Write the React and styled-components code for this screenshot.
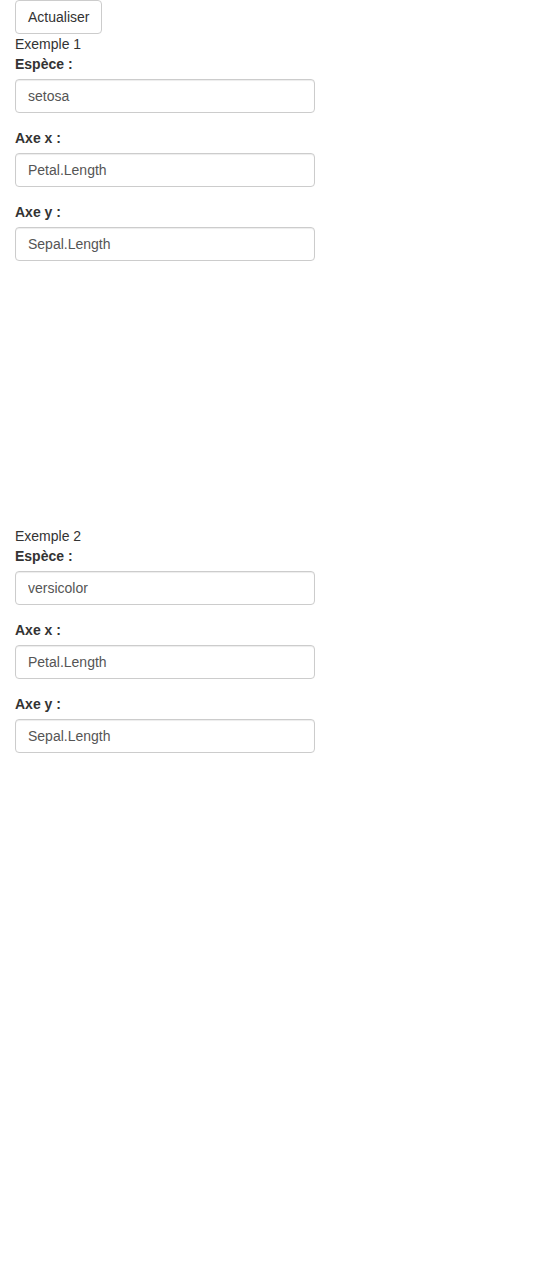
import React from "react";
import styled, { createGlobalStyle } from "styled-components";

const GlobalStyle = createGlobalStyle`
	html, body {
		margin: 0;
		padding: 0;
		background: #fff;
	}
	body {
		font-family: "Liberation Sans", Arial, Helvetica, sans-serif;
		font-size: 14px;
		line-height: 20px;
		color: #333;
	}
	* {
		box-sizing: border-box;
	}
`;

const Page = styled.div`
	padding: 0 15px;
	min-height: 1268px;
`;

const Button = styled.button`
	display: block;
	height: 34px;
	padding: 6px 12px;
	font-family: inherit;
	font-size: 14px;
	line-height: 20px;
	color: #333;
	background: #fff;
	border: 1px solid #ccc;
	border-radius: 4px;
	cursor: pointer;
`;

const Title = styled.div`
	line-height: 20px;
`;

const FormGroup = styled.div`
	width: 300px;
	margin-bottom: 15px;
`;

const Label = styled.label`
	display: block;
	margin-bottom: 5px;
	font-weight: bold;
`;

const Input = styled.input`
	display: block;
	width: 100%;
	height: 34px;
	padding: 6px 12px;
	font-family: inherit;
	font-size: 14px;
	line-height: 20px;
	color: #555;
	background: #fff;
	border: 1px solid #ccc;
	border-radius: 4px;
	box-shadow: inset 0 1px 1px rgba(0, 0, 0, 0.075);
`;

const PlotArea = styled.div`
	height: 250px;
`;

function Example({ title, species }) {
	return (
		<section>
			<Title>{title}</Title>
			<FormGroup>
				<Label>Espèce :</Label>
				<Input type="text" defaultValue={species} />
			</FormGroup>
			<FormGroup>
				<Label>Axe x :</Label>
				<Input type="text" defaultValue="Petal.Length" />
			</FormGroup>
			<FormGroup>
				<Label>Axe y :</Label>
				<Input type="text" defaultValue="Sepal.Length" />
			</FormGroup>
			<PlotArea />
		</section>
	);
}

export default function App() {
	return (
		<>
			<GlobalStyle />
			<Page>
				<Button>Actualiser</Button>
				<Example title="Exemple 1" species="setosa" />
				<Example title="Exemple 2" species="versicolor" />
			</Page>
		</>
	);
}
